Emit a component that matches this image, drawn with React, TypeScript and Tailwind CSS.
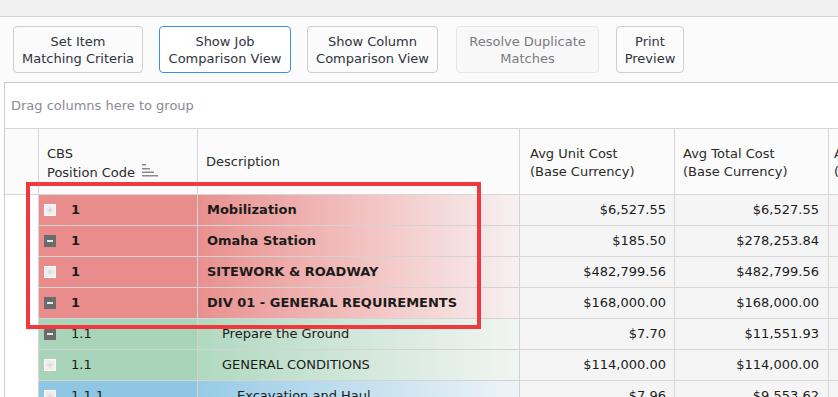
import React from 'react'

type Row = {
  code: string
  desc: string
  unit: string
  total: string
  level: 0 | 1 | 2
  open: boolean
}

const rows: Row[] = [
  { code: '1', desc: 'Mobilization', unit: '$6,527.55', total: '$6,527.55', level: 0, open: false },
  { code: '1', desc: 'Omaha Station', unit: '$185.50', total: '$278,253.84', level: 0, open: true },
  { code: '1', desc: 'SITEWORK & ROADWAY', unit: '$482,799.56', total: '$482,799.56', level: 0, open: false },
  { code: '1', desc: 'DIV 01 - GENERAL REQUIREMENTS', unit: '$168,000.00', total: '$168,000.00', level: 0, open: true },
  { code: '1.1', desc: 'Prepare the Ground', unit: '$7.70', total: '$11,551.93', level: 1, open: true },
  { code: '1.1', desc: 'GENERAL CONDITIONS', unit: '$114,000.00', total: '$114,000.00', level: 1, open: false },
  { code: '1.1.1', desc: 'Excavation and Haul', unit: '$7.96', total: '$9,553.62', level: 2, open: false },
]

const levelStyles = [
  {
    code: 'bg-[#e88c8c] font-bold',
    desc: 'bg-gradient-to-r from-[#e8908f] to-[#f6f1f1] font-bold pl-[9px]',
  },
  {
    code: 'bg-[#a8d4ba]',
    desc: 'bg-gradient-to-r from-[#b0d9c0] to-[#f2f5f3] pl-[24px]',
  },
  {
    code: 'bg-[#8ec6e4]',
    desc: 'bg-gradient-to-r from-[#97cbe6] to-[#eef4f7] pl-[39px]',
  },
]

function ToolButton({
  lines,
  width,
  active,
  disabled,
}: {
  lines: string[]
  width: number
  active?: boolean
  disabled?: boolean
}) {
  return (
    <div
      style={{ width }}
      className={
        'h-[47px] shrink-0 rounded-[4px] border flex flex-col items-center justify-center leading-[17px] text-[13px] ' +
        (active
          ? 'border-[#3d8fe0] bg-white text-[#2f3340]'
          : disabled
            ? 'border-[#e6e6e6] bg-[#f8f8f8] text-[#7b7b80]'
            : 'border-[#cfcfcf] bg-[#fbfbfb] text-[#2f3340]')
      }
    >
      {lines.map((l) => (
        <span key={l} className="whitespace-nowrap">
          {l}
        </span>
      ))}
    </div>
  )
}

function ExpandBox({ open }: { open: boolean }) {
  return open ? (
    <svg width="12" height="12" viewBox="0 0 12 12" className="shrink-0">
      <rect x="0" y="0" width="12" height="12" fill="#6b6b6b" />
      <rect x="3" y="5" width="6" height="2" fill="#e8e8e8" />
    </svg>
  ) : (
    <svg width="12" height="12" viewBox="0 0 12 12" className="shrink-0">
      <rect x="0.5" y="0.5" width="11" height="11" fill="#f4eded" stroke="#fbfbfb" />
      <rect x="3" y="5.5" width="6" height="1" fill="#d9d2d2" />
      <rect x="5.5" y="3" width="1" height="6" fill="#d9d2d2" />
    </svg>
  )
}

function SortIcon() {
  return (
    <svg width="17" height="14" viewBox="0 0 17 14" className="shrink-0">
      <rect x="0" y="1" width="4" height="1.5" fill="#8a8a8a" />
      <rect x="0" y="5" width="8" height="1.5" fill="#8a8a8a" />
      <rect x="0" y="8.5" width="12" height="1.5" fill="#8a8a8a" />
      <rect x="0" y="12" width="16" height="1.5" fill="#8a8a8a" />
    </svg>
  )
}

export default function App() {
  return (
    <div
      className="w-[838px] h-[397px] overflow-hidden bg-white text-[13px] text-[#1c1c1c]"
      style={{ fontFamily: '"DejaVu Sans", Verdana, sans-serif' }}
    >
      {/* top strip */}
      <div className="h-[17px] bg-[#f0f0f0] border-b border-[#d4d4d4]" />

      {/* toolbar */}
      <div className="h-[65px] bg-[#fbfbfb] flex items-start pt-[9px] pl-[13px]">
        <ToolButton lines={['Set Item', 'Matching Criteria']} width={130} />
        <div className="w-[16px]" />
        <ToolButton lines={['Show Job', 'Comparison View']} width={132} active />
        <div className="w-[16px]" />
        <ToolButton lines={['Show Column', 'Comparison View']} width={131} />
        <div className="w-[18px]" />
        <ToolButton lines={['Resolve Duplicate', 'Matches']} width={143} disabled />
        <div className="w-[17px]" />
        <ToolButton lines={['Print', 'Preview']} width={68} />
      </div>

      {/* grid */}
      <div className="relative ml-[4px] border-l border-t border-[#cbcbcb] h-[315px] overflow-hidden">
        <div className="h-[45px] flex items-center pl-[6px] text-[#8a8a95] bg-white">
          Drag columns here to group
        </div>

        {/* header */}
        <div className="flex h-[67px] border-t border-b border-[#d6d6d6] bg-[#fbfbfb] text-[#2a2a2a] leading-[18px]">
          <div className="w-[34px] shrink-0 border-r border-[#d6d6d6]" />
          <div className="w-[159px] shrink-0 border-r border-[#d6d6d6] flex items-center pl-[8px] pt-[3px]">
            <div>
              <div>CBS</div>
              <div className="flex items-end gap-[7px]">
                <span>Position Code</span>
                <span className="mb-[5px]">
                  <SortIcon />
                </span>
              </div>
            </div>
          </div>
          <div className="w-[322px] shrink-0 border-r border-[#d6d6d6] flex items-center pl-[8px]">
            Description
          </div>
          <div className="w-[155px] shrink-0 border-r border-[#d6d6d6] flex flex-col justify-center pl-[10px] pt-[3px]">
            <span>Avg Unit Cost</span>
            <span>(Base Currency)</span>
          </div>
          <div className="w-[154px] shrink-0 border-r border-[#d6d6d6] flex flex-col justify-center pl-[8px] pt-[3px]">
            <span>Avg Total Cost</span>
            <span>(Base Currency)</span>
          </div>
          <div className="w-[140px] shrink-0 flex flex-col justify-center pl-[5px] pt-[3px] whitespace-nowrap">
            <span>Avg Quantity</span>
            <span>(Base Unit)</span>
          </div>
        </div>

        {/* rows */}
        {rows.map((r, i) => {
          const s = levelStyles[r.level]
          return (
            <div key={i} className="flex h-[31px]">
              <div className="w-[34px] shrink-0 bg-white border-r border-[#d6d6d6]" />
              <div
                className={
                  'w-[159px] shrink-0 border-r border-b border-[#d3d3d3] flex items-center pl-[5px] ' +
                  s.code
                }
              >
                <ExpandBox open={r.open} />
                <span className="ml-[15px]">{r.code}</span>
              </div>
              <div
                className={
                  'w-[322px] shrink-0 border-r border-b border-[#d3d3d3] flex items-center whitespace-nowrap ' +
                  s.desc
                }
              >
                {r.desc}
              </div>
              <div className="w-[155px] shrink-0 border-r border-b border-[#d8d8d8] bg-[#f5f5f5] flex items-center justify-end pr-[8px]">
                {r.unit}
              </div>
              <div className="w-[154px] shrink-0 border-r border-b border-[#d8d8d8] bg-[#f5f5f5] flex items-center justify-end pr-[9px]">
                {r.total}
              </div>
              <div className="w-[140px] shrink-0 border-b border-[#d8d8d8] bg-[#f5f5f5]" />
            </div>
          )
        })}

        {/* highlight frame */}
        <div className="absolute left-[21px] top-[99px] w-[455px] h-[147px] border-[4px] border-[#f0393c] pointer-events-none" />
      </div>
    </div>
  )
}
